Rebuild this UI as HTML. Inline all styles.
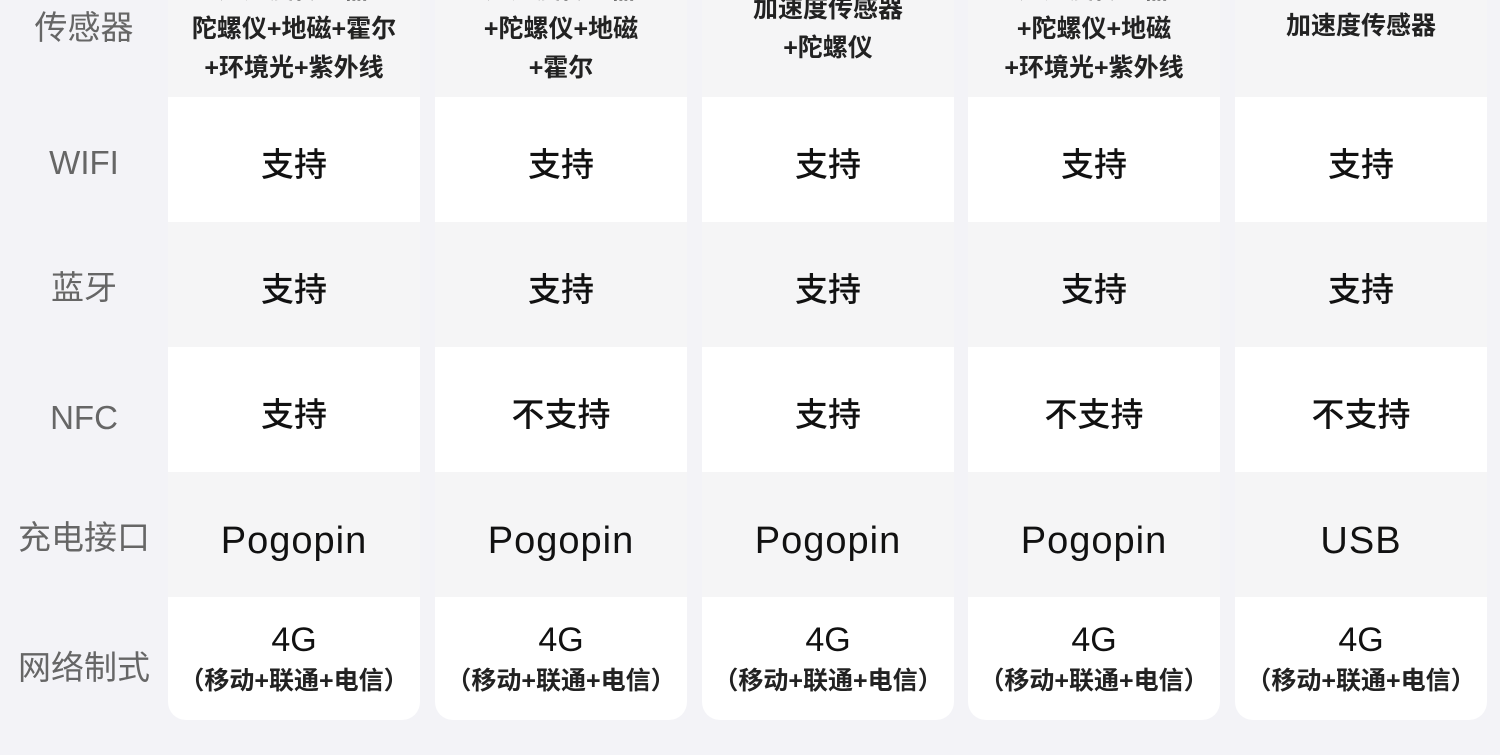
<!DOCTYPE html>
<html><head><meta charset="utf-8"><style>
*{margin:0;padding:0;box-sizing:border-box}
body{width:1500px;height:755px;overflow:hidden;background:#f3f3f7;font-family:"Liberation Sans","Noto Sans CJK SC",sans-serif;position:relative}
.lab{position:absolute;left:0;width:168px;text-align:center;color:#666;font-size:33px;line-height:40px}
.col{position:absolute;top:-20px;width:252px;height:740px;border-radius:0 0 18px 18px;overflow:hidden}
.cell{position:absolute;left:0;width:100%;display:flex;flex-direction:column;align-items:center;justify-content:center;color:#111;text-align:center}
.g{background:#f5f5f6}.w{background:#fff}
.v{font-size:33px;font-weight:500}
.e{font-size:38px;letter-spacing:1px;padding-top:14px}
.s{font-size:25px;font-weight:bold;line-height:39px;color:#222}
</style></head><body>
<div class="lab" style="top:8px">传感器</div>
<div class="lab" style="top:143px">WIFI</div>
<div class="lab" style="top:268px">蓝牙</div>
<div class="lab" style="top:398px">NFC</div>
<div class="lab" style="top:518px">充电接口</div>
<div class="lab" style="top:648px">网络制式</div>

<script>
var xs=[168,435,702,968,1235];
var top1=[
 '<div class="s" style="position:absolute;top:-9px;width:100%">加速度传感器<br>陀螺仪+地磁+霍尔<br>+环境光+紫外线</div>',
 '<div class="s" style="position:absolute;top:-9px;width:100%">加速度传感器<br>+陀螺仪+地磁<br>+霍尔</div>',
 '<div class="s" style="position:absolute;top:10px;width:100%">加速度传感器<br>+陀螺仪</div>',
 '<div class="s" style="position:absolute;top:-9px;width:100%">加速度传感器<br>+陀螺仪+地磁<br>+环境光+紫外线</div>',
 '<div class="s" style="position:absolute;top:27px;width:100%">加速度传感器</div>'];
var nfc=['支持','不支持','支持','不支持','不支持'];
var chg=['Pogopin','Pogopin','Pogopin','Pogopin','USB'];
var h='';
for(var i=0;i<5;i++){
 h+='<div class="col" style="left:'+xs[i]+'px">'+
 '<div class="cell g" style="top:0;height:117px;display:block">'+top1[i]+'</div>'+
 '<div class="cell w v" style="top:117px;height:125px;padding-top:4px">支持</div>'+
 '<div class="cell g v" style="top:242px;height:125px;padding-top:4px">支持</div>'+
 '<div class="cell w v" style="top:367px;height:125px;padding-top:4px">'+nfc[i]+'</div>'+
 '<div class="cell g e" style="top:492px;height:125px">'+chg[i]+'</div>'+
 '<div class="cell w" style="top:617px;height:123px;justify-content:flex-start;padding-top:24px">'+
 '<div style="font-size:34px;line-height:38px">4G</div><div style="font-size:25px;font-weight:bold;white-space:nowrap;line-height:44px;color:#222">（移动+联通+电信）</div></div>'+
 '</div>';
}
document.write(h);
</script>
</body></html>
